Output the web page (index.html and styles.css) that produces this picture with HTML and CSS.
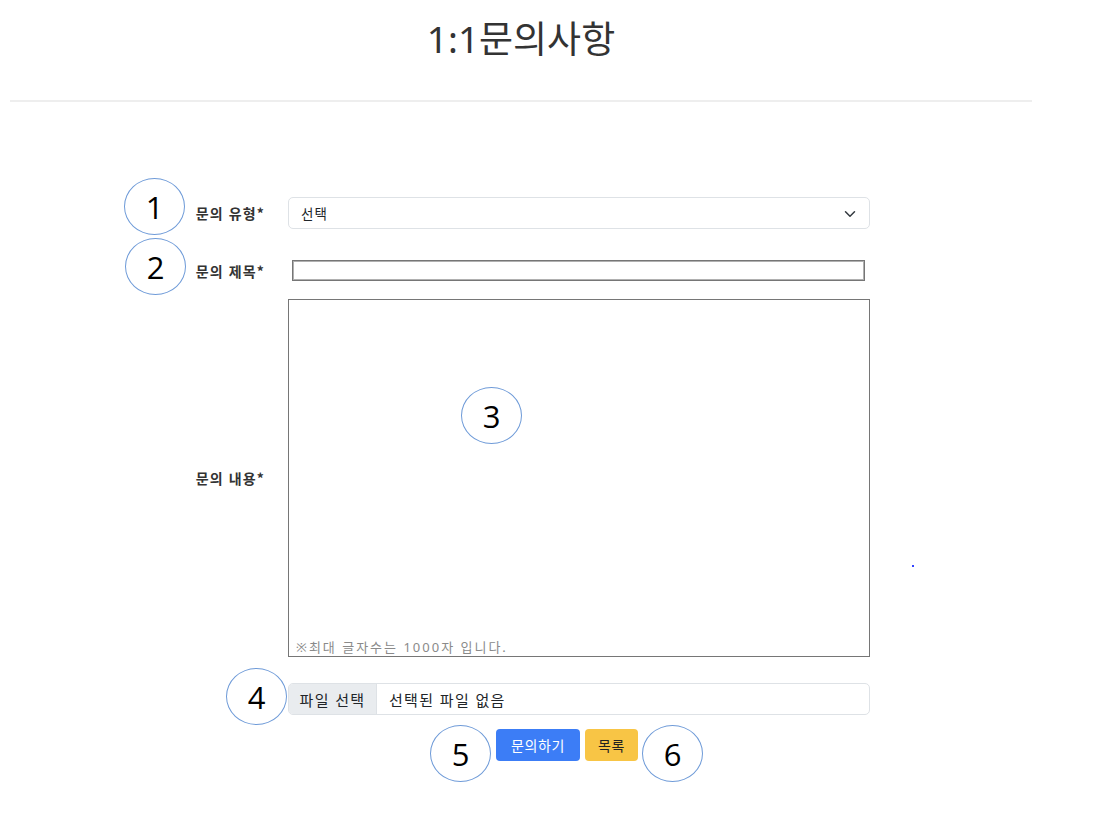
FILE: index.html
```html
<!DOCTYPE html>
<html lang="ko">
<head>
<meta charset="utf-8">
<title>1:1문의사항</title>
<link rel="stylesheet" href="styles.css">
</head>
<body>
<div class="page">
  <header class="header">
    <h1 class="title">1:1문의사항</h1>
  </header>
  <form class="form">
    <div class="row row-type">
      <label class="label">문의 유형*</label>
      <div class="select"><span>선택</span>
        <svg class="chev" width="12" height="12" viewBox="0 0 16 16"><path d="M2 5l6 6 6-6" fill="none" stroke="#343a40" stroke-width="2" stroke-linecap="round" stroke-linejoin="round"/></svg>
      </div>
    </div>

    <div class="row row-title">
      <label class="label">문의 제목*</label>
      <input class="text-input" type="text">
    </div>

    <div class="row row-content">
      <label class="label">문의 내용*</label>
      <div class="textarea"><span class="hint">※최대 글자수는 1000자 입니다.</span></div>
    </div>

    <div class="row row-file">
      <span class="label"></span>
      <div class="file"><span class="file-btn">파일 선택</span><span class="file-name">선택된 파일 없음</span></div>
    </div>

    <div class="row row-buttons">
      <span class="label"></span>
      <div class="buttons">
        <button type="button" class="btn btn-primary">문의하기</button>
        <button type="button" class="btn btn-warning">목록</button>
      </div>
    </div>
  </form>

  <div class="anno a1">1</div>
  <div class="anno a2">2</div>
  <div class="anno a3">3</div>
  <div class="anno a4">4</div>
  <div class="anno a5">5</div>
  <div class="anno a6">6</div>
  <div class="dot"></div>
</div>
</body>
</html>
```

FILE: styles.css
```css
* { box-sizing: border-box; }
html, body { margin: 0; padding: 0; background: #fff; }
body { font-family: "Noto Sans CJK KR", "Noto Sans", sans-serif; color: #212529; }
.page { position: relative; width: 1096px; height: 824px; }
.header {
  margin-left: 10px;
  width: 1022px;
  height: 102px;
  border-bottom: 2px solid #eeeeee;
  display: flex;
  justify-content: center;
}
.title {
  margin: 15px 0 0 0;
  font-family: "Noto Sans", "Noto Sans CJK KR", sans-serif;
  font-size: 37px;
  font-weight: 400;
  line-height: 48px;
  color: #333;
}
.form {
  display: flex;
  flex-direction: column;
  margin-top: 95px;
}
.row {
  display: flex;
  align-items: center;
  gap: 23px;
}
.label {
  width: 265px;
  flex: none;
  text-align: right;
  font-size: 14px;
  font-weight: 700;
  color: #333;
  letter-spacing: 1.1px;
}
.select {
  width: 582px;
  height: 32px;
  border: 1px solid #dee2e6;
  border-radius: 5px;
  display: flex;
  align-items: center;
  justify-content: space-between;
  padding: 0 13px 0 12px;
  font-size: 13.5px;
  letter-spacing: 1px;
  color: #212529;
}
.chev { margin-top: 1px; }
.row-title { margin-top: 31px; }
.text-input {
  margin-left: 4px;
  width: 573px;
  height: 21px;
  border: 1px solid #767676;
  outline: 1px solid #b0b0b0;
  outline-offset: -2px;
  padding: 0;
}
.row-content { margin-top: 18px; }
.textarea {
  width: 582px;
  height: 358px;
  border: 1px solid #767676;
  display: flex;
  flex-direction: column;
  justify-content: flex-end;
  padding: 0 0 0 7px;
}
.hint { font-family: "Noto Sans", "Noto Sans CJK KR", sans-serif; font-size: 13px; color: #8a8a8a; line-height: 18px; letter-spacing: 2px; }
.row-file { margin-top: 26px; }
.file {
  width: 582px;
  height: 32px;
  border: 1px solid #dee2e6;
  border-radius: 5px;
  display: flex;
  align-items: stretch;
  overflow: hidden;
  font-size: 15px;
  letter-spacing: 1.3px;
  color: #212529;
}
.file-btn {
  width: 88px;
  background: #e9ecef;
  border-right: 1px solid #dee2e6;
  display: flex;
  align-items: center;
  justify-content: center;
}
.file-name { display: flex; align-items: center; padding-left: 12px; }
.row-buttons { margin-top: 14px; }
.buttons { display: flex; padding-left: 208px; gap: 5px; }
.btn {
  height: 32px;
  border: none;
  border-radius: 4px;
  font-family: inherit;
  font-size: 14px;
  letter-spacing: 0.6px;
  padding: 0;
  cursor: pointer;
}
.btn-primary { width: 84px; background: #3c7df6; color: #fff; }
.btn-warning { width: 53px; background: #f8c545; color: #222; }
.anno {
  position: absolute;
  width: 61px;
  height: 57px;
  border: 1.6px solid #6f9bd8;
  border-radius: 50%;
  background: #fff;
  display: flex;
  align-items: center;
  justify-content: center;
  font-family: "Open Sans", "Liberation Sans", sans-serif;
  font-size: 31px;
  color: #000;
}
.a1 { left: 124px; top: 178px; }
.a2 { left: 125px; top: 238px; }
.a3 { left: 461px; top: 387px; }
.a4 { left: 226px; top: 668px; }
.a5 { left: 430px; top: 725px; }
.a6 { left: 642px; top: 725px; }
.dot { position: absolute; left: 912px; top: 565px; width: 2px; height: 2px; background: #3344ff; }
```
